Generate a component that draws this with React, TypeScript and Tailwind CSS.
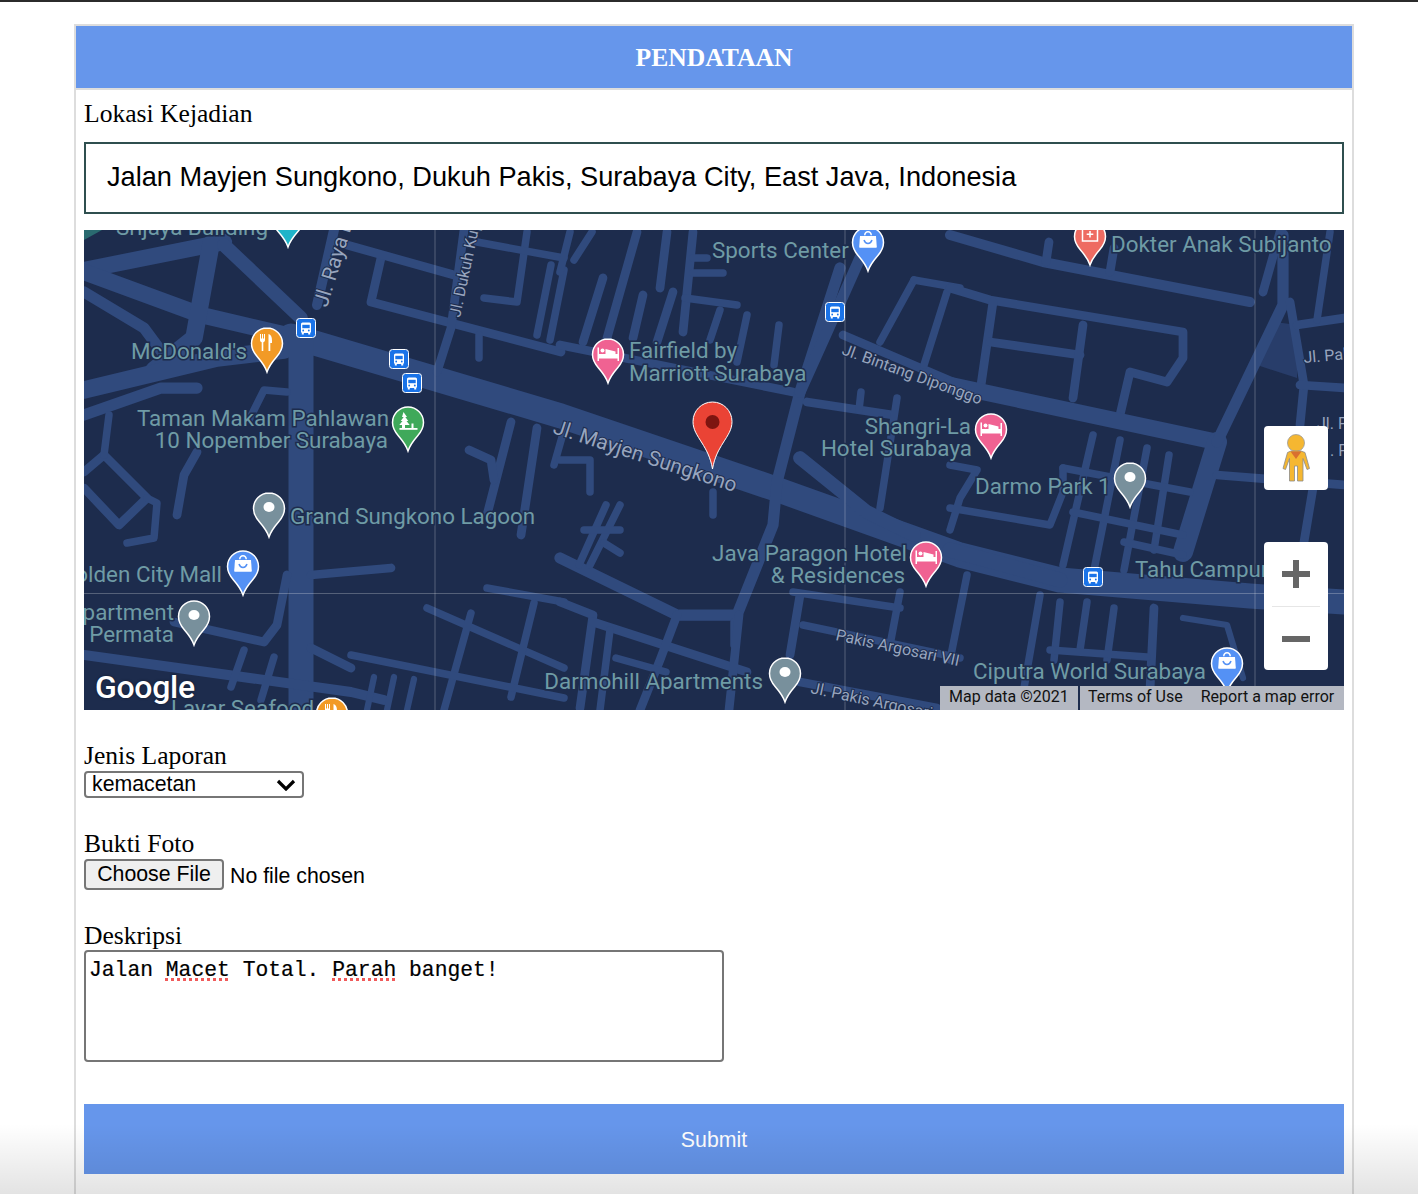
import React from 'react';

type Road = [number, string];

// map-local coordinates, map box is 1260x480
const ROADS: Road[] = [
  // main road
  [20, '207,106 477,186 689,258 876,325 976,350 1166,366 1260,372'],
  // north west junction
  [13, '0,40 110,18 140,12'],
  [13, '0,42 117,85 207,106'],
  [9, '0,62 60,98 80,125'],
  [14, '127,14 110,108 70,140'],
  [11, '140,15 217,88'],
  [14, '0,160 133,128 200,120'],
  [9, '0,185 77,158 113,158'],
  [20, '217,108 217,300 217,480'],
  [8, '233,75 250,0'],
  [7, '297,28 287,72 477,122'],
  [7, '263,15 370,45'],
  [7, '380,0 367,98 353,142'],
  [7, '427,192 403,285'],
  [7, '453,198 437,305'],
  [7, '385,220 407,230 410,250'],
  [6, '203,162 180,160 165,190'],
  [7, '113,222 100,245 93,285'],
  [7, '0,258 35,295 63,268 20,225 0,242'],
  [6, '25,185 20,225'],
  [6, '63,268 73,273 70,308 43,313'],
  [7, '227,345 307,338'],
  [7, '203,345 193,395 180,412 90,392'],
  [8, '0,425 267,462 300,470'],
  [7, '227,418 267,438'],
  [6, '160,420 147,457'],
  [6, '190,427 177,470'],
  [6, '343,378 480,438'],
  [6, '403,358 480,372'],
  [6, '387,383 360,480'],
  [6, '450,373 427,467'],
  [6, '267,425 480,468'],
  [5, '290,447 283,480'],
  [5, '310,447 303,480'],
  [5, '330,449 323,480'],
  [6, '443,2 433,72 400,68'],
  [6, '393,12 480,28'],
  [6, '467,35 453,105'],
  [6, '480,40 466,110'],
  [6, '395,105 395,128'],
  [6, '470,235 480,200'],
  // centre
  [7, '553,2 523,108'],
  [6, '508,2 490,30'],
  [6, '486,2 476,42'],
  [7, '583,2 576,58'],
  [7, '519,48 499,112'],
  [7, '559,65 549,108'],
  [7, '589,62 573,112'],
  [7, '609,2 599,102'],
  [6, '609,28 623,28'],
  [6, '609,43 639,43'],
  [6, '601,68 653,75'],
  [6, '636,80 626,110'],
  [6, '663,85 653,132'],
  [6, '695,95 690,135'],
  [7, '476,115 709,162'],
  [9, '756,38 716,162 693,252 689,295 653,385 593,385 476,328'],
  [9, '776,28 743,102 716,162'],
  [7, '759,105 876,155'],
  [7, '723,172 809,185'],
  [6, '777,162 775,180'],
  [6, '813,168 796,278'],
  [11, '716,228 783,282 830,305'],
  [6, '830,50 796,112'],
  [6, '830,50 876,58'],
  [6, '863,62 840,135'],
  [6, '536,275 506,335'],
  [6, '522,275 495,335'],
  [6, '500,300 536,300'],
  [6, '520,313 536,323'],
  [6, '629,262 629,285'],
  [6, '476,230 506,230 506,262'],
  [7, '476,372 509,385 496,478'],
  [7, '509,392 663,442'],
  [7, '593,385 576,430 556,480'],
  [6, '532,428 582,442'],
  [7, '716,365 706,425'],
  [6, '719,395 876,428'],
  [6, '709,362 816,378'],
  [6, '816,362 806,415'],
  [7, '716,452 853,478'],
  [6, '526,400 516,480'],
  [6, '650,392 650,415'],
  [7, '655,385 645,480'],
  // east
  [8, '866,5 959,32 1166,72'],
  [7, '965,12 962,32'],
  [7, '1030,18 1026,42'],
  [7, '866,58 906,70 1099,102 1099,128 1083,152 1046,142 1036,185'],
  [7, '909,72 896,162'],
  [7, '906,112 996,125'],
  [7, '999,95 989,168'],
  [13, '866,155 1133,212'],
  [16, '1133,212 1099,322'],
  [9, '1133,212 1199,75 1199,5'],
  [7, '1206,72 1220,155 1216,195'],
  [7, '1213,95 1260,88'],
  [7, '1216,155 1260,158'],
  [7, '1133,245 1260,255'],
  [7, '1229,258 1219,318'],
  [7, '1196,2 1179,62'],
  [6, '1246,2 1233,90'],
  [6, '1009,205 979,335'],
  [6, '1036,210 1010,340'],
  [6, '1063,218 1040,340'],
  [6, '1085,225 1070,320'],
  [6, '979,238 1106,262'],
  [6, '989,282 1099,305'],
  [6, '1040,312 1099,325'],
  [6, '866,278 966,295 979,262 979,238'],
  [6, '866,235 893,240 876,268 866,300'],
  [12, '866,320 976,350'],
  [6, '883,345 866,430'],
  [6, '956,365 940,458'],
  [6, '976,372 970,430'],
  [6, '1003,372 996,420'],
  [6, '1030,378 1023,430'],
  [7, '1070,378 1066,460'],
  [6, '966,420 1063,427'],
  [5, '1099,388 1143,395 1159,448'],
];

const Bus = ({ x, y }: { x: number; y: number }) => (
  <g transform={`translate(${x - 10} ${y - 10})`}>
    <rect x="0.5" y="0.5" width="19" height="19" rx="3" fill="#1a73e8" stroke="#fff" />
    <rect x="5" y="4.5" width="10" height="10.5" rx="1.5" fill="#fff" />
    <rect x="6.3" y="6.8" width="7.4" height="3.4" fill="#1a73e8" />
    <rect x="5.8" y="15" width="2" height="1.5" fill="#fff" />
    <rect x="12.2" y="15" width="2" height="1.5" fill="#fff" />
    <circle cx="7.2" cy="12.5" r="0.9" fill="#1a73e8" />
    <circle cx="12.8" cy="12.5" r="0.9" fill="#1a73e8" />
  </g>
);

function Glyph({ kind }: { kind: string }) {
  if (kind === 'food') {
    return (
      <g fill="#fff">
        <path d="M9.5 7h1v4.5h1V7h1v4.5h1V7h1v6c0 1.2-.8 2-1.7 2.2V24h-1.6v-8.8C10.3 15 9.5 14.2 9.5 13z" />
        <path d="M18 7c2.3.4 3.500 3 3.500 6.500V16h-1.700v8H18z" />
      </g>
    );
  }
  if (kind === 'bed') {
    return (
      <g fill="#fff">
        <path d="M6 9.5h1.5v6.5h18.5V10h1.500v13H26v-2.500H7.500V23H6z" />
        <circle cx="11" cy="12.500" r="2" />
        <path d="M14 11l10 2.500V16H14z" />
      </g>
    );
  }
  if (kind === 'bag') {
    return (
      <g>
        <path d="M16.500 5c-2.400 0-4 1.800-4 4.300h1.500c0-1.600 1-2.800 2.500-2.800s2.500 1.200 2.500 2.800H20.500c0-2.500-1.600-4.300-4-4.300z" fill="#fff" />
        <path d="M8.500 10h16l.8 11c0 .4-.3.700-.7.700H8.400c-.4 0-.7-.3-.7-.7z" fill="#fff" />
        <path d="M12.500 14c.8 2.400 2.200 3.400 4 3.400s3.200-1 4-3.400" fill="none" stroke="#5491f5" strokeWidth="1.500" />
      </g>
    );
  }
  if (kind === 'tree') {
    return (
      <g fill="#fff">
        <path d="M14 6l3.500 5h-1.700l3 4h-1.800l3.200 4H9.800l3.200-4h-1.800l3-4H12.500z" transform="translate(-2 0)" />
        <rect x="10.500" y="19" width="3" height="3" />
        <rect x="8" y="22" width="18" height="1.800" />
        <rect x="20" y="17.500" width="2" height="4.500" />
      </g>
    );
  }
  if (kind === 'hospital') {
    return (
      <g fill="none" stroke="#fff" strokeWidth="1.500">
        <path d="M9 9.500l7.500-3 7.500 3V21H9z" />
        <path d="M16.500 11v6.500M13.200 14.200h6.600" />
      </g>
    );
  }
  if (kind === 'dot') return <ellipse cx="16.500" cy="15" rx="5.500" ry="5" fill="#fff" />;
  return null;
}

// x is the tip's x, y the tip's y
const Pin = ({ x, y, color, kind }: { x: number; y: number; color: string; kind: string }) => (
  <g transform={`translate(${x - 16.5} ${y - 46})`}>
    <path
      d="M16.500 1C7.900 1 1 7.900 1 16.500 1 22 3.500 26 7 30c3.500 4 7.500 9 9.500 15 2-6 6-11 9.500-15 3.500-4 6-8 6-13.500C32 7.900 25.100 1 16.500 1z"
      fill={color}
      stroke="#fff"
      strokeWidth="1.500"
    />
    <Glyph kind={kind} />
  </g>
);

const Label = ({ x, y, end, children }: { x: number; y: number; end?: boolean; children: string }) => (
  <text
    x={x}
    y={y}
    textAnchor={end ? 'end' : 'start'}
    className="fill-[#6f9ba5] stroke-[#1d2c4d] stroke-[3px] [paint-order:stroke] text-[22.4px]"
  >
    {children}
  </text>
);

const RoadLabel = ({ at, size, children }: { at: string; size: number; children: string }) => (
  <text
    transform={at}
    fontSize={size}
    className="fill-[#98a5be] stroke-[#1d2c4d] stroke-[2px] [paint-order:stroke]"
  >
    {children}
  </text>
);

function MapCanvas() {
  return (
    <div className="relative h-[480px] w-[1260px] overflow-hidden bg-[#1d2c4d] font-['Roboto',sans-serif]">
      <svg width="1260" height="480" viewBox="0 0 1260 480" className="block">
        <path d="M1173 135L1191 92 1213 95 1213 148z" fill="#283d6a" />
        <path d="M0 0L18 0 0 10z" fill="#2a6a70" />
        {ROADS.map(([w, pts], i) => (
          <polyline
            key={i}
            points={pts}
            fill="none"
            stroke="#304a7d"
            strokeWidth={w * 1.25}
            strokeLinecap="round"
            strokeLinejoin="round"
          />
        ))}
        <path d="M1171 0V480M761 0V480M351 0V480M0 363.500H1260" stroke="#ffffff" strokeOpacity="0.25" fill="none" />

        <RoadLabel at="translate(243 78) rotate(-73)" size={20.8}>Jl. Raya Darmo</RoadLabel>
        <RoadLabel at="translate(376 88) rotate(-78)" size={16}>Jl. Dukuh Kupang</RoadLabel>
        <RoadLabel at="translate(468 203) rotate(18)" size={20.8}>Jl. Mayjen Sungkono</RoadLabel>
        <RoadLabel at="translate(757 124) rotate(20)" size={16}>Jl. Bintang Diponggo</RoadLabel>
        <RoadLabel at="translate(751 410) rotate(12)" size={16}>Pakis Argosari VII</RoadLabel>
        <RoadLabel at="translate(726 463) rotate(12)" size={16}>Jl. Pakis Argosari</RoadLabel>
        <RoadLabel at="translate(1220 133) rotate(-5)" size={16}>Jl. Pakis</RoadLabel>
        <RoadLabel at="translate(1233 199)" size={16}>Jl. Pakis</RoadLabel>
        <RoadLabel at="translate(1246 226)" size={16}>. Pakis</RoadLabel>

        <Label x={32} y={5}>Srijaya Building</Label>
        <Label x={47} y={129}>McDonald's</Label>
        <Label x={305} y={196} end>Taman Makam Pahlawan</Label>
        <Label x={304} y={218} end>10 Nopember Surabaya</Label>
        <Label x={206} y={294}>Grand Sungkono Lagoon</Label>
        <Label x={138} y={352} end>Golden City Mall</Label>
        <Label x={90} y={390} end>Apartment</Label>
        <Label x={90} y={412} end>Permata</Label>
        <Label x={87} y={486}>Layar Seafood</Label>
        <Label x={628} y={28}>Sports Center</Label>
        <Label x={545} y={128}>Fairfield by</Label>
        <Label x={545} y={151}>Marriott Surabaya</Label>
        <Label x={887} y={204} end>Shangri-La</Label>
        <Label x={888} y={226} end>Hotel Surabaya</Label>
        <Label x={823} y={331} end>Java Paragon Hotel</Label>
        <Label x={821} y={353} end>&amp; Residences</Label>
        <Label x={679} y={459} end>Darmohill Apartments</Label>
        <Label x={1027} y={22}>Dokter Anak Subijanto</Label>
        <Label x={891} y={264}>Darmo Park 1</Label>
        <Label x={1051} y={347}>Tahu Campur Sari</Label>
        <Label x={889} y={449}>Ciputra World Surabaya</Label>

        <Pin x={204} y={18} color="#1fb4c9" kind="none" />
        <Pin x={183} y={143} color="#f29a26" kind="food" />
        <Pin x={324} y={222} color="#3fa95a" kind="tree" />
        <Pin x={185} y={308} color="#78909c" kind="dot" />
        <Pin x={159} y={366} color="#5491f5" kind="bag" />
        <Pin x={110} y={416} color="#78909c" kind="dot" />
        <Pin x={248} y={513} color="#f29a26" kind="food" />
        <Pin x={784} y={42} color="#5491f5" kind="bag" />
        <Pin x={524} y={154} color="#f06292" kind="bed" />
        <Pin x={842} y={357} color="#f06292" kind="bed" />
        <Pin x={701} y={473} color="#78909c" kind="dot" />
        <Pin x={1006} y={36} color="#ee6b62" kind="hospital" />
        <Pin x={907} y={229} color="#f06292" kind="bed" />
        <Pin x={1046} y={278} color="#78909c" kind="dot" />
        <Pin x={1143} y={463} color="#5491f5" kind="bag" />

        <Bus x={222} y={98} />
        <Bus x={315} y={129} />
        <Bus x={328} y={153} />
        <Bus x={751} y={82} />
        <Bus x={1009} y={347} />

        {/* selected location marker */}
        <g transform="translate(608 171)">
          <path
            d="M20.500 1C9.700 1 1 9.700 1 20.500c0 8 4 13.500 9 21.500 4 6.500 8.500 14 10.500 26 2-12 6.500-19.500 10.500-26 5-8 9-13.500 9-21.500C40 9.700 31.300 1 20.500 1z"
            fill="#ea4335"
            stroke="#fff"
            strokeWidth="1"
          />
          <circle cx="20.500" cy="21" r="7" fill="#7d1510" />
        </g>
      </svg>

      <div className="absolute left-[11px] top-[436px] text-[32px] leading-[42px] font-medium tracking-[-0.3px] text-white [text-shadow:0_0_3px_rgba(0,0,0,0.4)]">
        Google
      </div>

      <div className="absolute right-[16px] top-[196px] flex h-[64px] w-[64px] items-center justify-center rounded-sm bg-white">
        <svg width="28" height="48" viewBox="0 0 28 48">
          <circle cx="14" cy="9" r="8.500" fill="#f5b731" stroke="#9a9a9a" strokeWidth="0.8" />
          <path
            d="M9 17h10l4 1.500 4.500 16-2.500 1-4-11V47h-5.500V32h-3v15H7.500V24.500l-4 11-2.500-1 4.500-16z"
            fill="#f5b731"
            stroke="#8a8a8a"
            strokeWidth="0.8"
          />
          <path d="M8.500 17.500h11L14 25z" fill="#d9702f" />
        </svg>
      </div>

      <div className="absolute right-[16px] top-[312px] flex h-[128px] w-[64px] flex-col items-center rounded-sm bg-white">
        <div className="flex h-[64px] items-center justify-center">
          <svg width="28" height="28" viewBox="0 0 28 28">
            <path d="M11 0h6v11h11v6H17v11h-6V17H0v-6h11z" fill="#666666" />
          </svg>
        </div>
        <div className="h-[1px] w-[48px] bg-[#e6e6e6]" />
        <div className="flex h-[63px] items-center justify-center">
          <svg width="28" height="6" viewBox="0 0 28 6">
            <rect width="28" height="6" fill="#666666" />
          </svg>
        </div>
      </div>

      <div className="absolute bottom-0 right-0 flex h-[24px] text-[16px] leading-[22px] text-[#111]">
        <div className="w-[138px] bg-[#b4b8c2] pl-[9px]">Map data ©2021</div>
        <div className="ml-[2px] flex w-[264px] gap-[18px] bg-[#b4b8c2] pl-[8px]">
          <span>Terms of Use</span>
          <span>Report a map error</span>
        </div>
      </div>
    </div>
  );
}

export default function App() {
  return (
    <div className="relative h-[1194px] w-[1418px] overflow-hidden bg-white font-['Liberation_Serif',serif] text-black">
      <div className="h-[2px] bg-[#2b2b2b]" />

      <div className="ml-[74px] mt-[22px] w-[1280px] border-2 border-[#dddddd] bg-white">
        <div className="flex h-[64px] items-center justify-center border-b-2 border-[#dddddd] bg-[#6696eb] pt-[2px] text-[25.6px] font-bold text-white">
          PENDATAAN
        </div>

        <div className="px-2 pb-10">
          <div className="pt-[8px] text-[25.6px] leading-[32px]">Lokasi Kejadian</div>
          <div className="mt-[12px] flex h-[72px] items-center border-2 border-[#2f4f4f] pb-[2px] pl-[21px] font-['Liberation_Sans',sans-serif] text-[27.2px]">
            Jalan Mayjen Sungkono, Dukuh Pakis, Surabaya City, East Java, Indonesia
          </div>

          <div className="mt-[16px]">
            <MapCanvas />
          </div>

          <div className="mt-[31px] text-[25.6px] leading-[30px]">Jenis Laporan</div>
          <div className="flex h-[27px] w-[220px] items-center justify-between rounded-[4px] border-2 border-[#767676] pl-[6px] pr-[6px] font-['Liberation_Sans',sans-serif] text-[21.3px]">
            <span className="mt-[1px]">kemacetan</span>
            <svg width="20" height="12" viewBox="0 0 20 12">
              <path d="M2 2l8 8 8-8" fill="none" stroke="#000" strokeWidth="3.200" />
            </svg>
          </div>

          <div className="mt-[31px] text-[25.6px] leading-[30px]">Bukti Foto</div>
          <div className="flex h-[31px] items-center font-['Liberation_Sans',sans-serif] text-[21.3px]">
            <div className="flex h-[31px] w-[140px] items-center justify-center rounded-[4px] border-2 border-[#767676] bg-[#efefef]">
              Choose File
            </div>
            <span className="ml-[6px] mt-[5px]">No file chosen</span>
          </div>

          <div className="mt-[31px] text-[25.6px] leading-[29px]">Deskripsi</div>
          <div className="h-[112px] w-[640px] rounded-[4px] border-2 border-[#767676] px-[3px] pt-[5px] font-['Liberation_Mono',monospace] text-[21.33px] leading-[26px] [-webkit-text-stroke:0.2px_#000]">
            Jalan{' '}
            <span className="underline decoration-[#f05a5a] decoration-dotted decoration-[3px] underline-offset-[2px] [text-decoration-skip-ink:none]">Macet</span>{' '}
            Total.{' '}
            <span className="underline decoration-[#f05a5a] decoration-dotted decoration-[3px] underline-offset-[2px] [text-decoration-skip-ink:none]">Parah</span>{' '}
            banget!
          </div>

          <div className="mt-[42px] flex h-[70px] items-center justify-center bg-[#6696eb] pt-[4px] font-['Liberation_Sans',sans-serif] text-[21.3px] text-white">
            Submit
          </div>
        </div>
      </div>

      {/* screenshot shadow at the bottom edge */}
      <div className="pointer-events-none absolute bottom-0 left-0 h-[70px] w-full bg-gradient-to-b from-black/0 to-black/[0.11]" />
    </div>
  );
}
